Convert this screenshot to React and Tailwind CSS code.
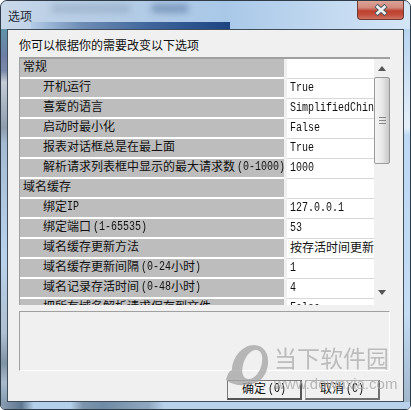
import React from "react";

const rows = [
  { name: "常规", section: true, value: "" },
  { name: "开机运行", value: "True" },
  { name: "喜爱的语言", value: "SimplifiedChinese" },
  { name: "启动时最小化", value: "False" },
  { name: "报表对话框总是在最上面", value: "True" },
  { name: "解析请求列表框中显示的最大请求数 (0-1000)", value: "1000" },
  { name: "域名缓存", section: true, value: "" },
  { name: "绑定IP", value: "127.0.0.1" },
  { name: "绑定端口 (1-65535)", value: "53" },
  { name: "域名缓存更新方法", value: "按存活时间更新" },
  { name: "域名缓存更新间隔 (0-24小时)", value: "1" },
  { name: "域名记录存活时间 (0-48小时)", value: "4" },
  { name: "把所有域名解析请求保存到文件", value: "False" },
];

function Mixed({ text }) {
  const parts = text.match(/[\u4e00-\u9fff]+|[^\u4e00-\u9fff]+/g) || [];
  return parts.map((p, i) =>
    /[\u4e00-\u9fff]/.test(p) ? (
      <span key={i} className="text-[12px]">{p}</span>
    ) : (
      <span
        key={i}
        className={
          "inline-block whitespace-pre text-[10px] scale-y-[1.2] font-normal " +
          (p.startsWith(" ") ? "ml-[2px]" : "")
        }
      >
        {p.trim()}
      </span>
    )
  );
}

function Button({ children, active }) {
  return (
    <button
      className={
        "w-[75px] h-[20px] flex items-center justify-center bg-[#f0f0f0] border-t border-l border-r-2 border-b-2 " +
        (active
          ? "border-t-[#777777] border-l-[#777777] border-r-[#555555] border-b-[#555555]"
          : "border-t-[#b0b0b0] border-l-[#b0b0b0] border-r-[#707070] border-b-[#707070]")
      }
    >
      {children}
    </button>
  );
}

export default function App() {
  return (
    <div className="w-[411px] h-[410px] relative overflow-hidden bg-white text-[#111111] font-['Liberation_Mono','Noto_Sans_CJK_SC',monospace] leading-none">
      <div className="w-full h-full relative flex flex-col rounded-t-[7px] rounded-b-[5px] overflow-hidden border border-[#2f3b47] bg-[linear-gradient(90deg,#8fa6bf_0%,#b7d2ec_50%,#bcd8f3_100%)] px-[6px] pb-[7px]">
        {/* aero glass: side and bottom reflections */}
        <div className="absolute left-0 top-[28px] bottom-0 w-[6px] bg-[linear-gradient(180deg,#5f93a8_0%,#6e7fa6_7%,#7a88a8_11%,#c4ccd6_14%,#8e9cac_26%,#a4bad2_30%,#b9d2ec_60%,#aebfd0_80%,#7f93a6_88%,#a8bccd_93%,#7b90a6_100%)]" />
        <div className="absolute right-0 top-[28px] bottom-0 w-[6px] bg-[linear-gradient(180deg,#b7d4f0_0%,#e6eff8_26%,#bcd8f3_28%,#c4dcf4_75%,#a9c0d6_92%,#9fb5c9_100%)]" />
        <div className="absolute left-0 right-0 bottom-0 h-[7px] bg-[linear-gradient(90deg,#8a9eb2_0%,#5f7890_5%,#b5d0ea_8%,#b5d0ea_17%,#7d95ad_20%,#6f8aa5_25%,#8ea6bd_35%,#8ea6bd_36%,#b9d2ec_40%,#b9d2ec_100%)]" />
        {/* aero glass: title bar, spanning the full frame */}
        <div className="absolute left-0 right-0 top-0 h-[28px] bg-[linear-gradient(90deg,#c9d9e9_0%,#bcd0e6_12%,#b2cbe6_35%,#a9c8e8_55%,#c2d9f0_80%,#d4e5f6_100%)]" />
        <div className="absolute left-[50px] top-[3px] w-[80px] h-[9px] rounded-full bg-[#8ea3bd] opacity-50 blur-[3px]" />
        <div className="absolute left-[150px] top-[3px] w-[38px] h-[9px] rounded-full bg-[#5f7ea6] opacity-60 blur-[3px]" />
        <div className="absolute left-[30px] top-[21px] w-[199px] h-[7px] bg-[linear-gradient(90deg,#b2cbe6_0%,#6f8db5_25%,#3f659c_60%,#1d4480_100%)]" />

        <div className="h-[28px] shrink-0 flex items-center pl-[1px] pt-[2px] relative">
          <span className="relative text-[12px] text-[#1c2836] font-['Noto_Sans_CJK_SC',sans-serif]">选项</span>
          <div className="absolute right-[0px] top-[-1px] w-[47px] h-[20px] rounded-b-[4px] border border-t-0 border-[#6e3a36] bg-[linear-gradient(180deg,#dca79c_0%,#d28a7c_40%,#bd3f2e_58%,#c4503e_80%,#cf7464_100%)] flex items-center justify-center">
            <svg width="16" height="12" viewBox="0 0 16 12">
              <path d="M3 1.5 L13 10.5 M13 1.5 L3 10.5" stroke="#4a5560" strokeWidth="4.6" />
              <path d="M3.5 2 L12.5 10 M12.5 2 L3.5 10" stroke="#f0f0f0" strokeWidth="2.8" />
            </svg>
          </div>
        </div>
        <div className="flex-1 relative bg-[#f0f0f0] border border-[#3f4d5a] flex flex-col pl-[11px] pr-[13px]">
          <div className="h-[27px] shrink-0 flex items-center pt-[2px] text-[12px] font-['Noto_Sans_CJK_SC',sans-serif] text-[#111111]">
            你可以根据你的需要改变以下选项
          </div>
          <div className="h-[248px] shrink-0 border-t-2 border-l border-t-[#a0a0a0] border-l-[#a0a0a0] flex overflow-hidden">
            <div className="flex-1 min-w-0">
              {rows.map((r) => (
                <div key={r.name} className="h-[20px] flex shrink-0">
                  <div
                    className={
                      "w-[264px] shrink-0 bg-[#bdbdbd] border-b-2 border-white flex items-center whitespace-nowrap overflow-hidden " +
                      (r.section ? "pl-[3px]" : "pl-[23px]")
                    }
                  >
                    <Mixed text={r.name} />
                  </div>
                  <div className="flex-1 min-w-0 ml-[3px] pl-[3px] bg-white border-b border-[#d8d8d8] flex items-center whitespace-nowrap overflow-hidden">
                    <Mixed text={r.value} />
                  </div>
                </div>
              ))}
            </div>
            <div className="w-[16px] shrink-0 bg-[#f0f0f0] flex flex-col items-stretch">
              <div className="h-[18px] shrink-0 flex items-center justify-center">
                <svg width="8" height="5" viewBox="0 0 8 5"><path d="M4 0 L8 5 L0 5 Z" fill="#555555" /></svg>
              </div>
              <div className="h-[87px] shrink-0 border border-[#9a9a9a] rounded-[2px] bg-[linear-gradient(90deg,#f4f4f4_0%,#e8e8e8_50%,#c8c8c8_100%)] flex items-center justify-center">
                <div className="w-[7px] h-[7px] border-t border-b border-[#888888] flex items-center">
                  <div className="w-full h-px bg-[#888888]" />
                </div>
              </div>
              <div className="flex-1" />
              <div className="h-[17px] shrink-0 flex items-start justify-center pt-[2px]">
                <svg width="8" height="5" viewBox="0 0 8 5"><path d="M0 0 L8 0 L4 5 Z" fill="#555555" /></svg>
              </div>
            </div>
          </div>
          <div className="mt-[6px] h-[60px] shrink-0 border-t border-l border-t-[#a0a0a0] border-l-[#a0a0a0] border-b border-r border-b-white border-r-white" />
          <div className="mt-[9px] flex justify-end gap-[3px] pr-[10px]">
            <Button active><Mixed text="确定 (O)" /></Button>
            <Button><Mixed text="取消 (C)" /></Button>
          </div>
        </div>
      </div>
      <div className="absolute left-[225px] top-[344px] w-[166px] h-[46px] pointer-events-none opacity-80">
        <svg className="absolute left-0 top-0" width="44" height="44" viewBox="0 0 44 44">
          <path fillRule="evenodd" d="M29 1 C39 1 44 10 43 20 C42 31 35 39 26 40 C18 42 9 42 1 36 C2 31 4 27 7 26 C7 14 17 1 29 1 Z M31 6 C25 6 20 13 18 21 C16 29 18 35 24 35 C30 35 36 27 37 18 C38 11 36 6 31 6 Z" fill="#a8a8a8" />
        </svg>
        <div className="absolute left-[49px] top-[2px] text-[23px] leading-[23px] text-[#b0b0b0] font-['Noto_Sans_CJK_SC',sans-serif] whitespace-nowrap">当下软件园</div>
        <div className="absolute left-[49px] top-[32px] text-[15px] leading-[15px] text-[#a9a9a9] font-['Liberation_Sans',sans-serif] whitespace-nowrap">www.downxia.com</div>
      </div>
    </div>
  );
}
